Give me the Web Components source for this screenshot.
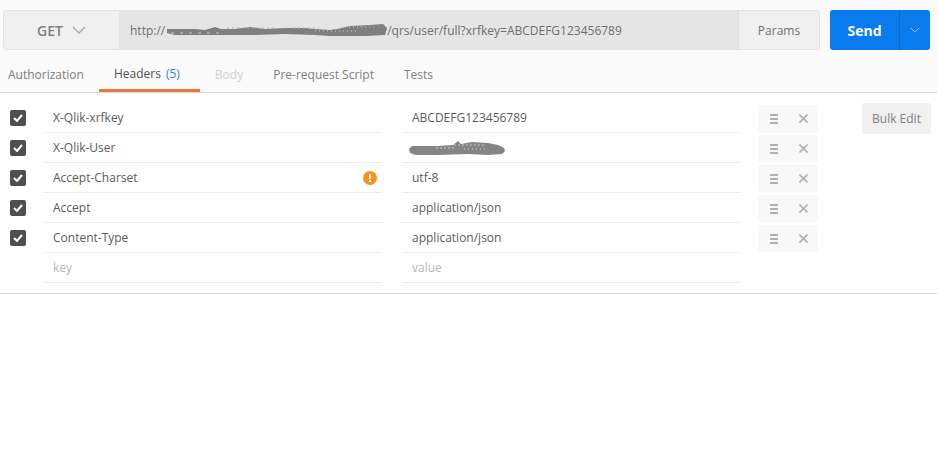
<!doctype html>
<html>
<head>
<meta charset="utf-8">
<style>
  html, body { margin: 0; background: #fff; }
  body { font-family: "Open Sans", sans-serif; font-size: 12px; color: #505050; }
</style>
</head>
<body>
<pm-app>
  <pm-request-bar slot="top" url-end="/qrs/user/full?xrfkey=ABCDEFG123456789"></pm-request-bar>
  <pm-tabs slot="top"></pm-tabs>
  <pm-headers>
    <pm-row key="X-Qlik-xrfkey" value="ABCDEFG123456789"></pm-row>
    <pm-row key="X-Qlik-User" redacted></pm-row>
    <pm-row key="Accept-Charset" value="utf-8" warn></pm-row>
    <pm-row key="Accept" value="application/json"></pm-row>
    <pm-row key="Content-Type" value="application/json"></pm-row>
    <pm-row empty></pm-row>
  </pm-headers>
</pm-app>
<script>
const chevron = (color, w = 14, h = 8) =>
  `<svg width="${w}" height="${h}" viewBox="0 0 14 8"><path d="M1 1l6 6 6-6" fill="none" stroke="${color}" stroke-width="1.3"/></svg>`

// scribbled-out bits of the screenshot, the light dashes give the speckled look
const urlScribble = `<svg width="222" height="14" viewBox="0 0 222 14">
  <path d="M2 6H30L40 7 50 4 56 6H70L85 4 100 6 120 5 140 5 150 6 165 7 172 6 185 3 205 2 218 1 222 5 220 12 200 13 180 13 165 13 150 12 120 11 90 12 60 12 30 12 10 12 2 10Z" fill="#7f7f7f"/>
  <path d="M62 5h48M128 5h26" stroke="#b5b5b5" stroke-width="1" stroke-dasharray="2 3"/>
  <path d="M150 8h44M176 4h36" stroke="#c6c6c6" stroke-width="1" stroke-dasharray="1 3"/>
  <path d="M6 10h52" stroke="#c8c8c8" stroke-width="1" stroke-dasharray="3 6"/>
</svg>`
const userScribble = `<svg width="98" height="16" viewBox="0 0 98 16" style="margin-left:-4px">
  <path d="M4 6H30L45 5 50 1 53 4 64 2 80 3 90 5 96 8 97 11 94 14 80 15 60 14 30 15 8 15 2 13 1 9Z" fill="#858585"/>
  <path d="M46 5h32M28 8h20" stroke="#c8c8c8" stroke-width="1" stroke-dasharray="2 2"/>
  <path d="M56 9h24" stroke="#d8d8d8" stroke-width="1" stroke-dasharray="1 3"/>
</svg>`

class PmApp extends HTMLElement {
  constructor() {
    super()
    this.attachShadow({ mode: 'open' }).innerHTML = `
      <style>
        :host { display: block; }
        .top { background: #fafafa; border-bottom: 1px solid #d9d9d9; height: 92px; }
      </style>
      <div class="top"><slot name="top"></slot></div>
      <slot></slot>`
  }
}

class PmRequestBar extends HTMLElement {
  constructor() {
    super()
    this.attachShadow({ mode: 'open' }).innerHTML = `
      <style>
        :host { display: flex; padding: 10px 7px 0 3px; gap: 10px; height: 40px; }
        .field { flex: 1; display: flex; border: 1px solid #e4e4e4; border-radius: 3px; box-sizing: border-box; overflow: hidden; }
        .method { width: 116px; background: #f0f0f0; display: flex; align-items: center; gap: 9px;
          font-size: 14px; font-weight: 600; color: #808080; border-right: 1px solid #e4e4e4; padding-left: 33px; box-sizing: border-box; }
        .url { flex: 1; background: #e5e5e5; display: flex; align-items: center; padding-left: 10px; color: #6e6e6e; }
        .params { width: 81px; background: #f0f0f0; border-left: 1px solid #e0e0e0; display: flex; align-items: center; justify-content: center; color: #707070; box-sizing: border-box; }
        .send { width: 100px; display: flex; background: #097bed; border-radius: 3px; color: #fff; font-weight: 700; font-size: 14px; }
        .send span { flex: 1; display: flex; align-items: center; justify-content: center; }
        .send i { width: 30px; border-left: 1px solid #0a68c8; display: flex; align-items: center; justify-content: center; }
        svg { display: block; flex: none; }
      </style>
      <div class="field">
        <div class="method">GET ${chevron('#a8a8a8')}</div>
        <div class="url">http://${urlScribble}${this.getAttribute('url-end')}</div>
        <div class="params">Params</div>
      </div>
      <div class="send"><span>Send</span><i>${chevron('#9cc9f7', 10, 6)}</i></div>`
  }
}

class PmTabs extends HTMLElement {
  constructor() {
    super()
    this.attachShadow({ mode: 'open' }).innerHTML = `
      <style>
        :host { display: flex; height: 42px; padding-left: 8px; box-sizing: border-box; }
        div { display: flex; align-items: center; padding: 7px 0 0; box-sizing: border-box; color: #808080; margin-right: 30px; }
        .on { color: #505050; border-bottom: 3px solid #e8793a; margin: 0 15px 0 -15px; padding: 7px 20px 0 15px; height: 42px; }
        .on b { font-weight: 400; color: #2f86d8; margin-left: 5px; }
        .off { color: #cfcfcf; }
      </style>
      <div>Authorization</div>
      <div class="on">Headers<b>(5)</b></div>
      <div class="off">Body</div>
      <div>Pre-request Script</div>
      <div>Tests</div>`
  }
}

class PmHeaders extends HTMLElement {
  constructor() {
    super()
    this.attachShadow({ mode: 'open' }).innerHTML = `
      <style>
        :host { display: block; position: relative; height: 201px; border-bottom: 1px solid #dcdcdc; box-sizing: border-box; padding-top: 10px; }
        .bulk { position: absolute; left: 862px; top: 10px; width: 69px; height: 31px; background: #f0f0f0; border-radius: 3px;
          display: flex; align-items: center; justify-content: center; color: #808080; }
      </style>
      <slot></slot>
      <div class="bulk">Bulk Edit</div>`
  }
}

class PmRow extends HTMLElement {
  constructor() {
    super()
    const empty = this.hasAttribute('empty')
    const value = this.hasAttribute('redacted')
      ? userScribble
      : empty ? 'value' : this.getAttribute('value')
    const warn = this.hasAttribute('warn')
      ? `<svg class="warn" width="14" height="14" viewBox="0 0 14 14"><circle cx="7" cy="7" r="7" fill="#f7931e"/><rect x="6" y="3" width="2" height="5" fill="#fff"/><rect x="6" y="9" width="2" height="2" fill="#fff"/></svg>`
      : ''
    this.attachShadow({ mode: 'open' }).innerHTML = `
      <style>
        :host { display: flex; height: 30px; }
        .check { width: 43px; display: flex; align-items: center; padding-left: 10px; box-sizing: border-box; }
        .box { width: 16px; height: 16px; background: #4f4f4f; border-radius: 2px; display: flex; align-items: center; justify-content: center; }
        .cell { width: 339px; box-sizing: border-box; border-bottom: 1px solid #ececec; padding-left: 10px; display: flex; align-items: center; justify-content: space-between; padding-right: 5px; color: #5c5c5c; }
        .gap { width: 20px; }
        .empty { color: #b8b8b8; }
        .actions { width: 60px; height: 27px; margin: 2px 0 0 17px; background: #f8f8f8; border-radius: 3px; display: flex; align-items: center; padding: 0 0 0 12px; gap: 21px; box-sizing: border-box; }
      </style>
      <div class="check">${empty ? '' : `<div class="box"><svg width="10" height="8" viewBox="0 0 10 8"><path d="M1 4l3 3 5-6" fill="none" stroke="#fff" stroke-width="2"/></svg></div>`}</div>
      <div class="cell ${empty ? 'empty' : ''}">${empty ? 'key' : this.getAttribute('key')}${warn}</div>
      <div class="gap"></div>
      <div class="cell ${empty ? 'empty' : ''}">${value}</div>
      ${empty ? '' : `<div class="actions">
        <svg width="8" height="10" viewBox="0 0 8 10"><path d="M0 1h8M0 5h8M0 9h8" stroke="#b0b0b0" stroke-width="2"/></svg>
        <svg width="9" height="9" viewBox="0 0 9 9"><path d="M.5.5l8 8M8.5.5l-8 8" stroke="#b0b0b0" stroke-width="1.6"/></svg>
      </div>`}`
  }
}

customElements.define('pm-app', PmApp)
customElements.define('pm-request-bar', PmRequestBar)
customElements.define('pm-tabs', PmTabs)
customElements.define('pm-headers', PmHeaders)
customElements.define('pm-row', PmRow)
</script>
</body>
</html>
